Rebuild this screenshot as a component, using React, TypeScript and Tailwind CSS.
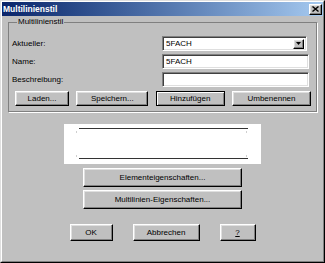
import React from 'react';

const raised =
  "border border-t-white border-l-white border-r-black border-b-black shadow-[inset_-1px_-1px_0_#808080,inset_1px_1px_0_#dfdfdf]";
const sunken =
  "border border-t-[#808080] border-l-[#808080] border-r-white border-b-white shadow-[inset_1px_1px_0_#404040,inset_-1px_-1px_0_#dfdfdf]";

function Btn({ label, w, h = "h-[15px]", isDefault = false, underline = false }: { label: string; w: string; h?: string; isDefault?: boolean; underline?: boolean }) {
  const text = underline ? <span className="underline">{label}</span> : label;
  if (isDefault) {
    return (
      <div className={`${w} ${h} border border-black bg-[#c0c0c0] shadow-[inset_1px_1px_0_#fff,inset_-1px_-1px_0_#808080] flex items-center justify-center`}>
        {text}
      </div>
    );
  }
  return <div className={`${w} ${h} ${raised} bg-[#c0c0c0] flex items-center justify-center`}>{text}</div>;
}

export default function App() {
  return (
    <div
      className="w-[325px] h-[263px] bg-[#c0c0c0] border border-t-[#dfdfdf] border-l-[#dfdfdf] border-r-black border-b-black text-[8px] leading-[10px] text-black"
      style={{ fontFamily: '"Liberation Sans", Arial, sans-serif' }}
    >
      <div className="h-full border border-t-white border-l-white border-r-[#808080] border-b-[#808080] flex flex-col">
        {/* title bar */}
        <div className="h-[14px] flex items-center justify-between pl-[1px] pr-[1px] bg-gradient-to-r from-[#0a246a] to-[#a6caf0]">
          <span className="text-white font-bold text-[8.5px]">Multilinienstil</span>
          <div className={`w-[13px] h-[11px] ${raised} bg-[#c0c0c0] flex items-center justify-center`}>
            <svg width="7" height="6" viewBox="0 0 7 6">
              <path d="M0.5 0.5 L6.5 5.5 M6.5 0.5 L0.5 5.5" stroke="#000" strokeWidth="1.4" />
            </svg>
          </div>
        </div>

        {/* group box */}
        <fieldset className="ml-[6px] mt-[1px] w-[309px] border border-[#808080] shadow-[1px_1px_0_#fff] pt-[9px] pb-[5px] pl-[3px] pr-[5px]">
          <legend className="ml-[5px] px-[1px] leading-[10px]">Multilinienstil</legend>
          <div className="flex flex-col">
            <div className="flex items-center h-[15px]">
              <span className="w-[150px]">Aktueller:</span>
              <div className={`w-[145px] h-[15px] ${sunken} bg-white flex items-center justify-between pl-[3px] pr-[2px]`}>
                <span>5FACH</span>
                <div className={`w-[11px] h-[10px] ${raised} bg-[#c0c0c0] flex items-center justify-center`}>
                  <svg width="5" height="3" viewBox="0 0 5 3">
                    <path d="M0 0 H5 L2.5 3 Z" fill="#000" />
                  </svg>
                </div>
              </div>
            </div>
            <div className="flex items-center h-[15px] mt-[3px]">
              <span className="w-[150px]">Name:</span>
              <div className={`w-[147px] h-[15px] ${sunken} bg-white flex items-center pl-[3px]`}>5FACH</div>
            </div>
            <div className="flex items-center h-[15px] mt-[3px]">
              <span className="w-[150px]">Beschreibung:</span>
              <div className={`w-[147px] h-[15px] ${sunken} bg-white`} />
            </div>
            <div className="flex justify-between mt-[4px] ml-[3px]">
              <Btn label="Laden..." w="w-[54px]" />
              <Btn label="Speichern..." w="w-[72px]" />
              <Btn label="Hinzufügen" w="w-[69px]" isDefault />
              <Btn label="Umbenennen" w="w-[79px]" />
            </div>
          </div>
        </fieldset>

        <div className="flex flex-col items-center">
          {/* preview */}
          <div className="mt-[12px] w-[197px] h-[40px] bg-white">
            <svg width="197" height="40" viewBox="0 0 197 40">
              <line x1="15" y1="4.5" x2="184" y2="4.5" stroke="#333" strokeWidth="1" />
              <line x1="15" y1="34.5" x2="184" y2="34.5" stroke="#333" strokeWidth="1" />
              <rect x="12" y="7" width="1" height="2" fill="#cfcfcf" />
              <rect x="182" y="7" width="1" height="2" fill="#cfcfcf" />
              <rect x="12" y="31" width="1" height="2" fill="#cfcfcf" />
              <rect x="182" y="31" width="1" height="2" fill="#cfcfcf" />
            </svg>
          </div>

          <div className="mt-[4px]">
            <Btn label="Elementeigenschaften..." w="w-[159px]" h="h-[19px]" />
          </div>
          <div className="mt-[3px]">
            <Btn label="Multilinien-Eigenschaften..." w="w-[159px]" h="h-[19px]" />
          </div>

          <div className="mt-[15px] flex gap-[20px]">
            <Btn label="OK" w="w-[43px]" h="h-[17px]" />
            <Btn label="Abbrechen" w="w-[67px]" h="h-[17px]" />
            <Btn label="?" w="w-[36px]" h="h-[17px]" underline />
          </div>
        </div>
      </div>
    </div>
  );
}
